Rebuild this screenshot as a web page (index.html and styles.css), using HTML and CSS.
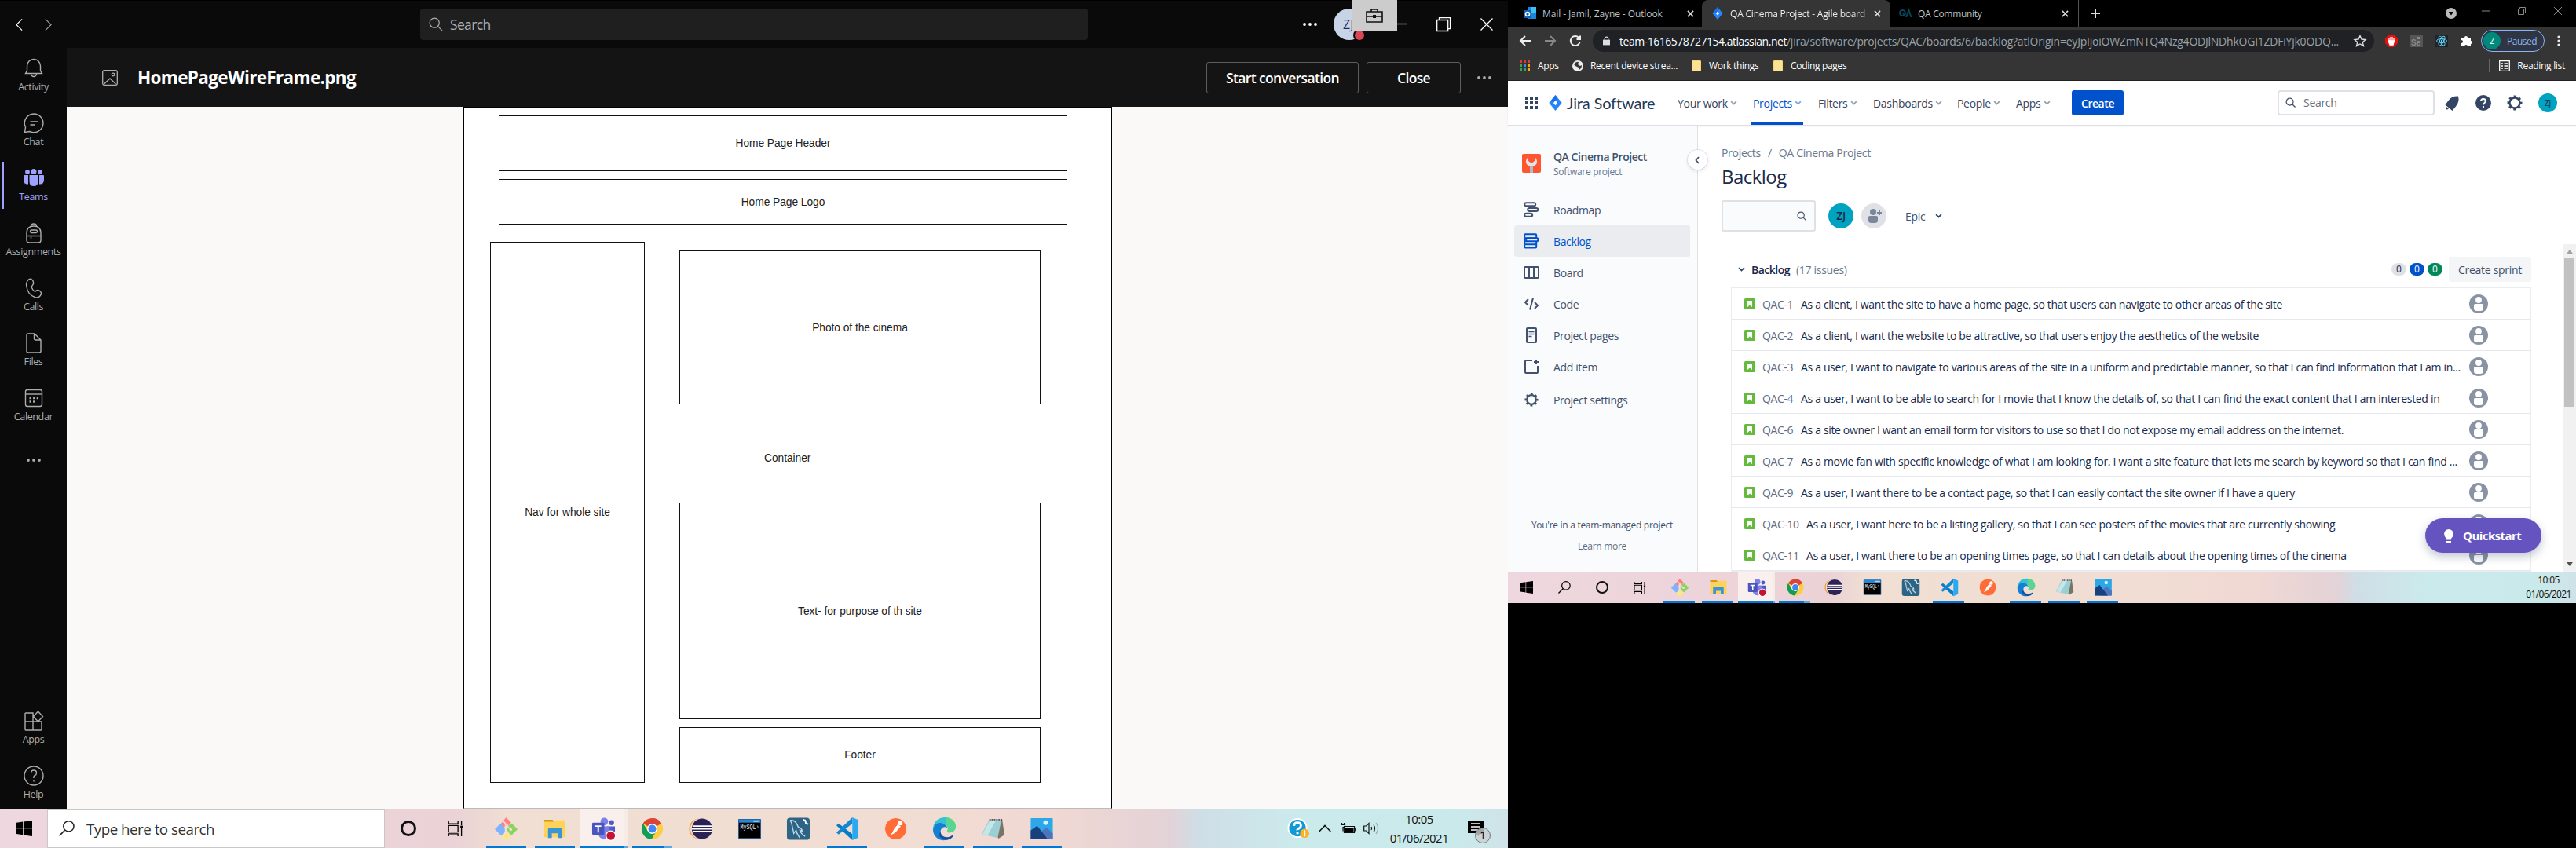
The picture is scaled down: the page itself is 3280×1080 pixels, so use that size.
FILE: index.html
```
<!DOCTYPE html>
<html lang="en">
<head>
<meta charset="utf-8">
<title>Desktop</title>
<link rel="stylesheet" href="styles.css">
</head>
<body>
<svg class="defs" aria-hidden="true">
  <symbol id="win" viewBox="0 0 20 20"><path d="M0 2.800 8.200 1.600v7.800H0zM9 1.500 20 0v9.400H9zM0 10.300h8.200v7.900L0 17zM9 10.300h11V20L9 18.400z"/></symbol>
  <symbol id="lens" viewBox="0 0 20 20"><circle cx="12.400" cy="7.400" r="6.600" fill="none" stroke="currentColor" stroke-width="1.500"/><path d="M7.600 12.200.6 19.400" stroke="currentColor" stroke-width="1.600"/></symbol>
  <symbol id="taskview" viewBox="0 0 20 20"><path d="M.7 0v3.300h12.600V0M.7 20v-3.300h12.600V20M.7 5.700h12.600v8.600H.7zM18 0v5.500M18 9.500V20" fill="none" stroke="currentColor" stroke-width="1.400"/><path d="M16.500 6h3v3h-3z"/></symbol>
  <symbol id="git" viewBox="0 0 32 32"><path d="m16 1 6.500 7-2.500 3-3 0-5 4-3.500-5z" fill="#ff7f84"/><path d="m8.500 9 6 7v6l-5 3L1 16.500z" fill="#80b3ff"/><path d="m23.500 9 7.500 7.500-8 8-3.500-3-2.500-4.500 1-5z" fill="#8ed35f"/><path d="m16 18.500 2.500 4 4.500 2-7 7-6.500-6.500 4-3z" fill="#ffe680"/><path d="m12 6 6 6m-3-2v12m2-10 5 5" fill="none" stroke="#f1dfd3" stroke-width="1.600"/><circle cx="15" cy="22" r="1.800" fill="#f1dfd3"/><circle cx="22" cy="17" r="1.800" fill="#f1dfd3"/></symbol>
  <symbol id="folder" viewBox="0 0 32 32"><path d="M2 4h11l2 3H2z" fill="#d99a00"/><path d="M2 7h12l2-2h14v22H2z" fill="#ffd35a"/><path d="M7 28V17q0-2 2-2h14q2 0 2 2v11h-5v-6h-8v6z" fill="#3a95d8"/></symbol>
  <symbol id="teams" viewBox="0 0 32 32"><circle cx="17" cy="6.500" r="5" fill="#7b83eb"/><circle cx="26.500" cy="8" r="3.300" fill="#5059c9"/><path d="M20 13h11v8a5 5 0 0 1-10 1z" fill="#5059c9"/><path d="M9 13h15v9a7.500 7.500 0 0 1-15 0z" fill="#7b83eb"/><rect x="1" y="8" width="16" height="16" rx="1.500" fill="#4b53bc"/><path d="M5 12.500h8M9 12.500V21" stroke="#fff" stroke-width="2"/><circle cx="25.500" cy="25" r="6.300" fill="#c4142f" stroke="#fff" stroke-width="1.400"/></symbol>
  <symbol id="chrome" viewBox="0 0 32 32"><circle cx="16" cy="16" r="14" fill="#ffcd40"/><path d="M16 16 3.900 9A14 14 0 0 1 28.100 9z" fill="#db4437"/><path d="M16 2A14 14 0 0 1 28.100 9H16z" fill="#db4437"/><path d="M3.900 9A14 14 0 0 0 15 30l6.500-11.500H10z" fill="#0f9d58"/><circle cx="16" cy="16" r="6.700" fill="#fff"/><circle cx="16" cy="16" r="5.200" fill="#4285f4"/></symbol>
  <symbol id="eclipse" viewBox="0 0 32 32"><circle cx="14" cy="16" r="13.500" fill="#f7941e"/><circle cx="16" cy="16" r="14" fill="#eedcd3"/><circle cx="17.500" cy="16" r="13.500" fill="#2c2255"/><path d="M5 12.500h25M4 16h27M5 19.500h25" stroke="#fff" stroke-width="2"/></symbol>
  <symbol id="mysql" viewBox="0 0 32 32"><rect x="1" y="3" width="30" height="26" rx="1" fill="#2b5f93"/><path d="M2 4h28v4H2z" fill="#2188d9"/><path d="M21 5h8v2h-8z" fill="#a9d4f5"/><path d="M2 8h28v20H2z"/><text x="3.500" y="17" class="mysql-label" fill="#eee" textLength="25" lengthAdjust="spacingAndGlyphs">MySQL›</text></symbol>
  <symbol id="bench" viewBox="0 0 32 32"><rect x="1" y="1.500" width="30" height="29" rx="4" fill="#2d6384"/><path d="M5 5c5-1 9 3 11 9 3 1 5 3 5 5l-3-1c1 4 4 6 7 8M5 5c4 4 2 8 4 12l1 5 3-4c1 5 3 7 5 10" fill="none" stroke="#bcd7e5" stroke-width="1.500"/><path d="m22 4 3 1 1 4 3 1" fill="none" stroke="#fff" stroke-width="2"/></symbol>
  <symbol id="code" viewBox="0 0 32 32"><path d="M23 1v30L2 11.500l3-2.500 18 14z" fill="#0a7bc8"/><path d="M23 1 2 21l3 2.500L23 9z" fill="#1587d0"/><path d="m23 1 8 3.500v23L23 31z" fill="#2aa9f0"/></symbol>
  <symbol id="postman" viewBox="0 0 32 32"><circle cx="16" cy="16" r="14.500" fill="#ff6c37" stroke="#fbe4da"/><path d="M20 9 10 24M19 11l3 2-7 8-4 2 4-8z" fill="#fff" stroke="#fff"/><circle cx="22" cy="8.500" r="3" fill="#fff"/></symbol>
  <symbol id="edge" viewBox="0 0 32 32"><path d="M1 17C1 7 8 1 17 1c8 0 14 6 14 12 0 5-4 8-8 8-3 0-4-1-3-3 2-5-2-8-6-8C8 10 3 13 1 17z" fill="#35c1d5"/><path d="M19 1c8 1 12 6 12 12 0 5-4 8-8 8-3 0-4-1-3-3 2-3 0-6-2-8z" fill="#62dc75" opacity=".75"/><path d="M1 17C3 9 9 7 14 9c3 1 5 3 6 6-5-4-10 1-9 7 1 5 5 8 10 8-10 4-20-3-20-13z" fill="#1480d3"/><path d="M11 18c-1 7 6 11 13 8 2-1 4-2 4-1-4 7-13 8-19 0z" fill="#164f9f"/></symbol>
  <symbol id="note" viewBox="0 0 32 32"><path d="M11 4h17l3 20-8 5z" fill="#7a7466"/><path d="M11 4h16l-5 24L1 23z" fill="#9ccfd4"/><path d="M12 5h8L9 24l-7-1z" fill="#c7e6e7"/><path d="M11 4h17" stroke="#555" stroke-width="2" stroke-dasharray="2 1"/></symbol>
  <symbol id="photo" viewBox="0 0 32 32"><rect x="1.500" y="2" width="29" height="28" rx="1" fill="#2ca8e8"/><circle cx="21" cy="8" r="3" fill="#d6f1ff"/><path d="m15 20 7-6 8.500 8v8h-20z" fill="#4e74bd"/><path d="M1.500 18 10 12l14 18H1.500z" fill="#17407c"/></symbol>
  <symbol id="jira" viewBox="0 0 18 22"><path d="m9 0 9 11-9 11L0 11z" fill="#2684ff"/><path d="m9 7.500 3 3.500-3 3.500L6 11z" fill="#fff"/><path d="m9 0 3 4-3 3.500L6 11l-3-3.500z" fill="#1468e0" opacity=".7"/></symbol>
  <symbol id="chev" viewBox="0 0 10 6"><path d="m1.200 1 3.800 3.600L8.800 1" fill="none" stroke="currentColor" stroke-width="2"/></symbol>
  <symbol id="x" viewBox="0 0 10 10"><path d="m1 1 8 8M9 1 1 9" stroke="currentColor" stroke-width="1.700"/></symbol>
  <symbol id="dots" viewBox="0 0 20 6"><circle cx="3" cy="3" r="1.900"/><circle cx="10" cy="3" r="1.900"/><circle cx="17" cy="3" r="1.900"/></symbol>
  <symbol id="story" viewBox="0 0 14 14"><rect width="14" height="14" rx="1.500" fill="#63ba3c"/><path d="M4 3h6v8L7 8.500 4 11z" fill="#fff"/></symbol>
  <symbol id="person" viewBox="0 0 24 24"><circle cx="12" cy="12" r="12" fill="#8993a4"/><circle cx="12" cy="7" r="3.900" fill="#fff"/><path d="M6 13.500Q6 12 7.500 12h9q1.500 0 1.500 1.500V18q0 3-4 3h-4q-4 0-4-3z" fill="#fff"/></symbol>
  <symbol id="find" viewBox="0 0 14 14"><circle cx="6" cy="6" r="4.800" fill="none" stroke="currentColor" stroke-width="1.400"/><path d="m9.500 9.500 4 4" stroke="currentColor" stroke-width="1.400"/></symbol>
  <symbol id="gear" viewBox="0 0 20 20"><circle cx="10" cy="10" r="6.500" fill="none" stroke="currentColor" stroke-width="2.400"/><circle cx="10" cy="10" r="8.200" fill="none" stroke="currentColor" stroke-width="2.600" stroke-dasharray="3.220" stroke-dashoffset="1.600"/></symbol>
</svg>

<main class="teams-screen">
  <header class="titlebar">
    <svg class="tb-back" viewBox="0 0 10 18"><path d="M9 1 1 9l8 8"/></svg>
    <svg class="tb-fwd" viewBox="0 0 10 18"><path d="m1 1 8 8-8 8"/></svg>
    <div class="tb-search"><svg viewBox="0 0 20 20"><circle cx="8" cy="8" r="6.700"/><path d="m13 13 6 6"/></svg>Search</div>
    <svg class="tb-dots"><use href="#dots"/></svg>
    <div class="tb-avatar">ZJ</div>
    <svg class="tb-min" viewBox="0 0 12 18"><path d="M0 8.500h12"/></svg>
    <svg class="tb-max" viewBox="0 0 18 18"><path d="M.7 3.500h14v14h-14zM3.500 3V.7h14v14H15"/></svg>
    <svg class="tb-close" viewBox="0 0 16 16"><path d="m.5.500 15 15m0-15-15 15"/></svg>
    <div class="presence"></div>
    <div class="briefcase"><svg viewBox="0 0 22 18"><path d="M1 4h20v13H1zM7 4V1h8v3M1 10h20" fill="none" stroke="#111" stroke-width="1.600"/><path d="M9 8h4v4H9z"/></svg></div>
  </header>
  <div class="teams-body">
    <nav class="rail">
      <a><svg viewBox="0 0 26 26"><path d="M2.500 19.500 4.500 16v-6a8.500 8.500 0 0 1 17 0v6l2 3.500zM9.500 20a3.500 3.500 0 0 0 7 0"/></svg>Activity</a>
      <a><svg viewBox="0 0 26 26"><path d="M1.500 24.500 2.500 18A11.800 11.800 0 1 1 8 23.500zM8.500 11h9.500M8.500 15h5.500"/></svg>Chat</a>
      <a class="on"><svg viewBox="0 0 26 26"><circle cx="5" cy="5" r="2.900"/><circle cx="13" cy="4.500" r="3.500"/><circle cx="21" cy="5" r="2.900"/><path d="M0 10q0-1 1-1h5v11.500Q0 21 0 15zM26 10q0-1-1-1h-5v11.500q6 .500 6-5.500zM7.500 9h11v8q0 6-5.500 6t-5.500-6z"/></svg>Teams</a>
      <a><svg viewBox="0 0 26 26"><path d="M4 13q0-9 9-9t9 9v9q0 3-3 3H7q-3 0-3-3zM4 16.500h18M9.500 16.500v3.500M9.500 4q0-3 3.500-3t3.500 3"/><rect x="8.500" y="9" width="9" height="3.500" rx="1.700"/></svg>Assignments</a>
      <a><svg viewBox="0 0 26 26"><path d="M5 3.500Q7 .500 10 1.500q3 2 2.500 6l-2.500 4q1.500 4 4.500 6 3-3 5.500-1.500 3 2 2.500 4.500-2 5-7 4.500Q5 22 3.500 9 3.500 6 5 3.500z"/></svg>Calls</a>
      <a><svg viewBox="0 0 26 26"><path d="M4 3q0-2 2-2h8l8 8v14q0 2-2 2H6q-2 0-2-2zM13.500 1v6q0 2 2 2H22"/></svg>Files</a>
      <a><svg viewBox="0 0 26 26"><rect x="2.500" y="2.500" width="21" height="21" rx="2.500"/><path d="M2.500 8h21"/><path d="M7.500 13h12M7.500 17.500h8" stroke-width="2.300" stroke-dasharray="2 2.600"/></svg>Calendar</a>
      <svg class="rail-dots"><use href="#dots"/></svg>
      <a class="rail-apps"><svg viewBox="0 0 26 26"><path d="M2 4q0-1 1-1h9v22H3q-1 0-1-1zM12 14h11v10q0 1-1 1H12zM2 14h10M12.500 7.500l6-6.500 6 6.500-6 6.500z"/></svg>Apps</a>
      <a><svg viewBox="0 0 26 26"><circle cx="13" cy="13" r="12"/><path d="M9.500 10q0-4 3.500-4t3.500 3.500q0 2-2 3T13 16M13 18.500V20.500"/></svg>Help</a>
    </nav>
    <section class="viewer">
      <div class="filebar">
        <svg class="file-ico" viewBox="0 0 20 20"><rect x=".7" y=".7" width="18.600" height="18.600" rx="2"/><path d="m2.500 18 7.500-7 7.500 7"/><circle cx="14" cy="6" r="1.800"/></svg>
        <h1>HomePageWireFrame.png</h1>
        <button class="start">Start conversation</button>
        <button class="closebtn">Close</button>
        <svg class="fb-dots"><use href="#dots"/></svg>
      </div>
      <div class="stage">
        <div class="wire">
          <div class="box w-head">Home Page Header</div>
          <div class="box w-logo">Home Page Logo</div>
          <div class="box w-nav">Nav for whole site</div>
          <div class="box w-photo">Photo of the cinema</div>
          <div class="w-label">Container</div>
          <div class="box w-text">Text- for purpose of th site</div>
          <div class="box w-foot">Footer</div>
        </div>
      </div>
    </section>
  </div>
  <footer class="taskbar">
    <span class="start-cell"><svg><use href="#win"/></svg></span>
    <div class="type-search"><svg><use href="#lens"/></svg>Type here to search</div>
    <span class="cell cortana"><i></i></span>
    <span class="cell"><svg class="tv"><use href="#taskview"/></svg></span>
    <span class="app run"><svg><use href="#git"/></svg></span>
    <span class="app run"><svg><use href="#folder"/></svg></span>
    <span class="app run active"><svg><use href="#teams"/></svg></span>
    <span class="app run multi"><svg><use href="#chrome"/></svg></span>
    <span class="app"><svg><use href="#eclipse"/></svg></span>
    <span class="app"><svg><use href="#mysql"/></svg></span>
    <span class="app"><svg><use href="#bench"/></svg></span>
    <span class="app run"><svg><use href="#code"/></svg></span>
    <span class="app"><svg><use href="#postman"/></svg></span>
    <span class="app run"><svg><use href="#edge"/></svg></span>
    <span class="app run"><svg><use href="#note"/></svg></span>
    <span class="app run"><svg><use href="#photo"/></svg></span>
    <div class="tray">
      <svg class="t-help" viewBox="0 0 30 30"><circle cx="13.500" cy="14" r="13" fill="#fff"/><circle cx="13.500" cy="14" r="11" fill="#0f9ad6"/><path d="M9 11.500q0-4.500 4.500-4.500t4.500 4q0 2-2.500 3.500T13.500 17M13.500 19v3" fill="none" stroke="#fff" stroke-width="3"/><circle cx="23" cy="21" r="6" fill="#fcb026"/><path d="M23 20v5M23 17v1.700" stroke="#fff" stroke-width="2"/></svg>
      <svg class="t-up" viewBox="0 0 16 10"><path d="m.7 9 7.300-7.500L15.300 9" fill="none" stroke="#111" stroke-width="1.600"/></svg>
      <svg class="t-bat" viewBox="0 0 20 14"><path d="M4.500 4.500h13v8h-13zM18.800 6.500v4M.5 2.500h5v3H3v5M1.500 0v3M4.500 0v3" fill="none" stroke="#111" stroke-width="1.200"/><path d="M6 6h10.500v5.500H6z"/></svg>
      <svg class="t-vol" viewBox="0 0 20 16"><path d="M.7 5h3L7 1.500v13L3.700 11h-3zM10 6q1.500 2 0 4M13 3.500q3 4.500 0 9" fill="none" stroke="#111" stroke-width="1.200"/><path d="M16 1q5 7 0 14" fill="none" stroke="#9aa" stroke-width="1.200"/></svg>
      <div class="clock"><span>10:05</span><span>01/06/2021</span></div>
      <div class="notif"><svg viewBox="0 0 20 20"><path d="M0 0h20v16h-5l-1 4-4-4H0z"/><path d="M4 4h12M4 8h12M4 12h9" stroke="#fff" stroke-width="1.300"/></svg><b>1</b></div>
    </div>
  </footer>
</main>

<aside class="second">
  <div class="tabs">
    <div class="tab t1"><svg viewBox="0 0 16 16"><path d="M5 0h11v15H5z" fill="#1b87d6"/><path d="M10 0h6v8h-6z" fill="#50d9ff" opacity=".7"/><rect y="4" width="10" height="10" rx="1" fill="#0f5fb8"/><circle cx="5" cy="9" r="2.500" fill="none" stroke="#fff" stroke-width="1.600"/></svg><span>Mail - Jamil, Zayne - Outlook</span><svg class="tx"><use href="#x"/></svg></div>
    <div class="tab t2"><svg><use href="#jira"/></svg><span>QA Cinema Project - Agile board</span><svg class="tx"><use href="#x"/></svg></div>
    <div class="tab t3"><svg viewBox="0 0 16 12"><circle cx="4.500" cy="5.500" r="3.500" fill="none" stroke="#064456" stroke-width="2"/><path d="m5 6 3 4M9 11l3.500-9 3 9" fill="none" stroke="#064456" stroke-width="2"/></svg><span>QA Community</span><svg class="tx"><use href="#x"/></svg></div>
    <svg class="plus" viewBox="0 0 12 12"><path d="M6 0v12M0 6h12"/></svg>
    <div class="winbtns">
      <svg class="wb-c" viewBox="0 0 14 14"><circle cx="7" cy="7" r="7" fill="#bbb"/><path d="M3.800 5h6.400L7 9.500z"/></svg>
      <svg class="wb-m" viewBox="0 0 10 10"><path d="M0 5h10"/></svg>
      <svg class="wb-r" viewBox="0 0 10 10"><path d="M.5 2.500h7v7h-7zM2.500 2V.5h7v7H8"/></svg>
      <svg class="wb-x" viewBox="0 0 10 10"><path d="m0 0 10 10M10 0 0 10"/></svg>
    </div>
  </div>
  <div class="toolbar">
    <svg class="nv" viewBox="0 0 14 14"><path d="M14 7H1.500M7 1 1 7l6 6"/></svg>
    <svg class="nv dim" viewBox="0 0 14 14"><path d="M0 7h12.500M7 1l6 6-6 6"/></svg>
    <svg class="nv" viewBox="0 0 14 14"><path d="M12.500 9A6 6 0 1 1 11 2.700L13 5M13 .5V5H8.500"/></svg>
    <div class="omni">
      <svg class="lock" viewBox="0 0 10 12"><path d="M0 4.500h10V12H0z" fill="#ddd"/><path d="M2.500 5V3a2.500 2.500 0 0 1 5 0v2" fill="none" stroke="#ddd" stroke-width="1.300"/></svg>
      <span class="host">team-1616578727154.atlassian.net</span><span class="path">/jira/software/projects/QAC/boards/6/backlog?atlOrigin=eyJpIjoiOWZmNTQ4Nzg4ODJlNDhkOGI1ZDFiYjk0ODQ...</span>
      <svg class="star" viewBox="0 0 16 16"><path d="m8 1.500 2 4.500 5 .500-3.700 3.200 1.100 4.800L8 12l-4.400 2.500 1.100-4.800L1 6.500 6 6z" fill="none" stroke="#ddd" stroke-width="1.400"/></svg>
    </div>
    <svg class="ext" viewBox="0 0 16 16"><path d="M5 0h6l5 5v6l-5 5H5l-5-5V5z" fill="#e8100c"/><path d="M5 8V5m2 3V3m2 5V3m2 5V5M5 8l-1 0 2 5h4l1.500-5z" stroke="#fff" fill="#fff" stroke-width="1.300"/></svg>
    <svg class="ext" viewBox="0 0 16 16"><path d="M0 0h16v16H0z" fill="#555"/><path d="M9 3h4v3H9zm5 1 1-.5v2z" fill="#888"/><text x="1" y="14" class="se" fill="#888">Se</text></svg>
    <svg class="ext" viewBox="0 0 16 16"><path d="M0 0h16v16H0z" fill="#20232a"/><g fill="none" stroke="#61dafb" stroke-width=".9"><ellipse cx="8" cy="8" rx="6.500" ry="2.500"/><ellipse cx="8" cy="8" rx="6.500" ry="2.500" transform="rotate(60 8 8)"/><ellipse cx="8" cy="8" rx="6.500" ry="2.500" transform="rotate(120 8 8)"/></g><circle cx="8" cy="8" r="1.200" fill="#61dafb"/></svg>
    <svg class="ext" viewBox="0 0 16 16"><path d="M1 4h4a2 2 0 1 1 4 0h4v4a2 2 0 1 1 0 4v3H9a2 2 0 1 0-4 0H1v-4a2 2 0 1 0 0-4z" fill="#fff"/></svg>
    <div class="paused"><i>Z</i>Paused</div>
    <svg class="kebab" viewBox="0 0 4 14"><circle cx="2" cy="2" r="1.600"/><circle cx="2" cy="7" r="1.600"/><circle cx="2" cy="12" r="1.600"/></svg>
  </div>
  <div class="bookmarks">
    <svg class="bm-apps" viewBox="0 0 13 13"><path d="M0 1.500h13" stroke="#e5392f"/><path d="M0 6.500h4.500" stroke="#35a853"/><path d="M5 6.500h3.500" stroke="#4285f4"/><path d="M10 6.500h3" stroke="#f9ab00"/><path d="M0 11.500h8" stroke="#35a853"/><path d="M10 11.500h3" stroke="#f9ab00"/></svg>
    <span class="b1">Apps</span>
    <svg class="globe" viewBox="0 0 14 14"><circle cx="7" cy="7" r="7" fill="#eee"/><path d="M2 5q3-4 6-3l-1 3 3 2 2-1q0 5-4 6V9L4 7z" fill="#353535"/></svg>
    <span class="b2">Recent device strea...</span>
    <i class="fold"></i><span class="b3">Work things</span>
    <i class="fold"></i><span class="b4">Coding pages</span>
    <div class="reading"><svg viewBox="0 0 14 14"><path d="M.7.700h12.600v12.600H.7zM3 4h2m1.500 0H11M3 7h2m1.500 0H11M3 10h2m1.500 0H11" fill="none" stroke="#fff" stroke-width="1.300"/></svg>Reading list</div>
  </div>
  <div class="jnav">
    <svg class="grid9" viewBox="0 0 16 16"><path d="M0 2h16M0 8h16M0 14h16" stroke="#344563" stroke-width="4" stroke-dasharray="4 2"/></svg>
    <svg class="jlogo"><use href="#jira"/></svg>
    <span class="jname">Jira Software</span>
    <a class="n1">Your work<svg><use href="#chev"/></svg></a>
    <a class="n2 sel">Projects<svg><use href="#chev"/></svg></a>
    <a class="n3">Filters<svg><use href="#chev"/></svg></a>
    <a class="n4">Dashboards<svg><use href="#chev"/></svg></a>
    <a class="n5">People<svg><use href="#chev"/></svg></a>
    <a class="n6">Apps<svg><use href="#chev"/></svg></a>
    <button class="create">Create</button>
    <div class="jsearch"><svg><use href="#find"/></svg>Search</div>
    <div class="jicons">
      <svg viewBox="0 0 20 20"><path d="M18 1.500Q10 1 6 6.500L1.500 12.500l9 7.500 4.500-5.500q5-6 3-13zM3 15l3 3-3 .500z" fill="currentColor"/></svg>
      <svg viewBox="0 0 20 20"><circle cx="10" cy="10" r="10" fill="currentColor"/><path d="M7 8q0-3 3-3t3 2.600Q13 9 11.500 10T10 12.500M10 14v2" fill="none" stroke="#fff" stroke-width="2"/></svg>
      <svg><use href="#gear"/></svg>
      <i>ZJ</i>
    </div>
  </div>
  <div class="jbody">
    <div class="side">
      <div class="proj"><svg viewBox="0 0 24 24"><rect width="24" height="24" rx="2" fill="#ff5630"/><path d="M10 14h4v10h-4z" fill="#b3bac5"/><path d="M8 4v5l4 3 4-3V4q3 2 3 6 0 4-5 6h-4q-5-2-5-6 0-4 3-6z" fill="#dfe4ea"/></svg><div><b>QA Cinema Project</b><small>Software project</small></div></div>
      <a><svg viewBox="0 0 20 20"><rect x="1.200" y="1.200" width="14" height="4" rx="2"/><rect x="5.200" y="8" width="13" height="4" rx="2"/><rect x="1.200" y="14.800" width="10" height="4" rx="2"/></svg>Roadmap</a>
      <a class="cur"><svg viewBox="0 0 20 20"><rect x="1.200" y="1.200" width="15" height="5" rx="1"/><rect x="3.200" y="6.200" width="15" height="4" rx="1"/><path d="M1.200 6v11.500q0 1 1 1h13q1 0 1-1V10M1.200 14.300h15M1.200 10.200h3"/></svg>Backlog</a>
      <a><svg viewBox="0 0 20 20"><rect x="1" y="3" width="18" height="14" rx="1"/><path d="M7 3v14M13 3v14"/></svg>Board</a>
      <a><svg viewBox="0 0 20 20"><path d="M6 4 2 8l4 4M14 8l4 4-4 4M12 2.500 8 17.500"/></svg>Code</a>
      <a><svg viewBox="0 0 20 20"><rect x="4" y="1" width="12" height="18" rx="1"/><path d="M6.500 5.500h7M6.500 8.500h7M6.500 11.500h4" stroke-width="1.500"/></svg>Project pages</a>
      <a><svg viewBox="0 0 20 20"><path d="M11 2H3q-1 0-1 1v14q0 1 1 1h14q1 0 1-1V9M16 1v6M13 4h6"/></svg>Add item</a>
      <a class="last"><svg class="g"><use href="#gear"/></svg>Project settings</a>
      <p class="tm">You're in a team-managed project</p>
      <p class="lm">Learn more</p>
      <div class="collapse"><svg viewBox="0 0 6 10"><path d="M5 1 1.500 5 5 9" fill="none" stroke="#42526e" stroke-width="1.800"/></svg></div>
    </div>
    <div class="content">
      <div class="crumbs"><span>Projects</span><span>/</span><span>QA Cinema Project</span></div>
      <h2>Backlog</h2>
      <div class="filters">
        <div class="fsearch"><svg><use href="#find"/></svg></div>
        <i class="zj">ZJ</i>
        <svg class="adduser" viewBox="0 0 32 32"><circle cx="16" cy="16" r="16" fill="#dfe1e6"/><circle cx="15" cy="11" r="4" fill="#7a869a"/><path d="M9 18q0-2 2-2h8q2 0 2 2v4q0 3-4 3h-4q-4 0-4-3z" fill="#7a869a"/><path d="M20 12h6M23 9v6" stroke="#7a869a" stroke-width="2"/></svg>
        <span class="epic">Epic</span><svg class="ec"><use href="#chev"/></svg>
      </div>
      <div class="sect">
        <svg class="sc"><use href="#chev"/></svg><b>Backlog</b><span>(17 issues)</span>
        <i class="c0">0</i><i class="c1">0</i><i class="c2">0</i><button>Create sprint</button>
      </div>
      <div class="list">
        <div class="row"><svg class="st"><use href="#story"/></svg><em>QAC-1</em><span>As a client, I want the site to have a home page, so that users can navigate to other areas of the site</span><svg class="pe"><use href="#person"/></svg></div>
        <div class="row"><svg class="st"><use href="#story"/></svg><em>QAC-2</em><span>As a client, I want the website to be attractive, so that users enjoy the aesthetics of the website</span><svg class="pe"><use href="#person"/></svg></div>
        <div class="row"><svg class="st"><use href="#story"/></svg><em>QAC-3</em><span class="long">As a user, I want to navigate to various areas of the site in a uniform and predictable manner, so that I can find information that I am in...</span><svg class="pe"><use href="#person"/></svg></div>
        <div class="row"><svg class="st"><use href="#story"/></svg><em>QAC-4</em><span>As a user, I want to be able to search for I movie that I know the details of, so that I can find the exact content that I am interested in</span><svg class="pe"><use href="#person"/></svg></div>
        <div class="row"><svg class="st"><use href="#story"/></svg><em>QAC-6</em><span class="long">As a site owner I want an email form for visitors to use so that I do not expose my email address on the internet.</span><svg class="pe"><use href="#person"/></svg></div>
        <div class="row"><svg class="st"><use href="#story"/></svg><em>QAC-7</em><span>As a movie fan with specific knowledge of what I am looking for. I want a site feature that lets me search by keyword so that I can find ...</span><svg class="pe"><use href="#person"/></svg></div>
        <div class="row"><svg class="st"><use href="#story"/></svg><em>QAC-9</em><span>As a user, I want there to be a contact page, so that I can easily contact the site owner if I have a query</span><svg class="pe"><use href="#person"/></svg></div>
        <div class="row"><svg class="st"><use href="#story"/></svg><em class="wide">QAC-10</em><span>As a user, I want here to be a listing gallery, so that I can see posters of the movies that are currently showing</span><svg class="pe"><use href="#person"/></svg></div>
        <div class="row"><svg class="st"><use href="#story"/></svg><em class="wide">QAC-11</em><span>As a user, I want there to be an opening times page, so that I can details about the opening times of the cinema</span><svg class="pe"><use href="#person"/></svg></div>
      </div>
      <div class="scroll"><svg viewBox="0 0 8 5"><path d="M0 5 4 0l4 5z" fill="#a3a3a3"/></svg><i></i><svg class="dn" viewBox="0 0 8 5"><path d="m0 0 4 5 4-5z" fill="#505050"/></svg></div>
      <div class="quick"><svg viewBox="0 0 14 20"><path d="M7 0a7 7 0 0 1 7 7q0 4-3.500 7v2h-7v-2Q0 11 0 7a7 7 0 0 1 7-7zM3.500 17.500h7V20h-7z" fill="#fff"/></svg>Quickstart</div>
    </div>
  </div>
  <footer class="taskbar mini">
    <span class="cell"><svg class="wn"><use href="#win"/></svg></span>
    <span class="cell"><svg class="ln"><use href="#lens"/></svg></span>
    <span class="cell cortana"><i></i></span>
    <span class="cell"><svg class="tv"><use href="#taskview"/></svg></span>
    <span class="app run"><svg><use href="#git"/></svg></span>
    <span class="app run"><svg><use href="#folder"/></svg></span>
    <span class="app run active"><svg><use href="#teams"/></svg></span>
    <span class="app run multi"><svg><use href="#chrome"/></svg></span>
    <span class="app"><svg><use href="#eclipse"/></svg></span>
    <span class="app"><svg><use href="#mysql"/></svg></span>
    <span class="app"><svg><use href="#bench"/></svg></span>
    <span class="app run"><svg><use href="#code"/></svg></span>
    <span class="app"><svg><use href="#postman"/></svg></span>
    <span class="app run"><svg><use href="#edge"/></svg></span>
    <span class="app run"><svg><use href="#note"/></svg></span>
    <span class="app run"><svg><use href="#photo"/></svg></span>
    <div class="clock"><span>10:05</span><span>01/06/2021</span></div>
  </footer>
</aside>
</body>
</html>
```
FILE: styles.css
```
* { box-sizing: border-box; }
body { margin: 0; width: 3280px; height: 1080px; overflow: hidden; background: #000; display: flex; font-family: "Open Sans", "Noto Sans", sans-serif; white-space: nowrap; }
svg { display: block; flex: none; overflow: visible; }
button { font-family: inherit; padding: 0; border: 0; flex: none; }
i, em { font-style: normal; }
.defs { position: absolute; width: 0; height: 0; }
.mysql-label { font: 9px "Liberation Mono", monospace; }
.se { font: bold 10px "Liberation Sans", sans-serif; }

/* Teams window */
.teams-screen { width: 1920px; height: 1080px; flex: none; display: flex; flex-direction: column; }
.titlebar { position: relative; height: 61px; background: #0a0a0a; border-top: 1px solid #000; display: flex; align-items: center; flex: none; }
.titlebar svg { fill: none; stroke: #fff; stroke-width: 1.3; }
.tb-back { width: 9px; height: 17px; margin-left: 20px; }
.tb-fwd { width: 9px; height: 17px; margin-left: 28px; opacity: .6; }
.tb-search { width: 850px; height: 40px; margin-left: 469px; background: #1f1f1f; border-radius: 4px; display: flex; align-items: center; gap: 9px; padding-left: 11px; color: #adadad; font-size: 17.5px; letter-spacing: -.65px; }
.tb-search svg { width: 18px; height: 18px; stroke: #adadad; }
.titlebar .tb-dots { width: 20px; height: 6px; margin-left: 273px; fill: #fff; stroke: none; }
.tb-avatar { width: 40px; height: 40px; border-radius: 50%; background: #c7d4e8; color: #1b2c5c; margin-left: 20px; padding-left: 12px; line-height: 40px; font-size: 16px; overflow: hidden; }
.tb-min { width: 12px; height: 18px; margin-left: 41px; }
.tb-max { width: 18px; height: 18px; margin-left: 38px; }
.tb-close { width: 16px; height: 16px; margin-left: 38px; }
.presence { position: absolute; left: 1725px; top: 38px; width: 12px; height: 12px; border-radius: 50%; background: #dc4553; box-shadow: 0 0 0 2px #0a0a0a; }
.briefcase { position: absolute; left: 1721px; top: -1px; width: 58px; height: 40px; background: #ccc; display: flex; align-items: center; justify-content: center; }
.briefcase svg { width: 22px; height: 18px; stroke: none; fill: #111; }
.teams-body { flex: 1; display: flex; min-height: 0; }
.rail { width: 85px; background: #0a0a0a; display: flex; flex-direction: column; padding-top: 9px; }
.rail a { height: 70px; display: flex; flex-direction: column; align-items: center; padding-top: 4px; color: #adadad; font-size: 12.5px; letter-spacing: -.37px; line-height: 16px; gap: 3px; flex: none; }
.rail a svg { width: 26px; height: 26px; fill: none; stroke: #adadad; stroke-width: 1.4; }
.rail .on { color: #9ea2ff; position: relative; }
.rail .on::before { content: ""; position: absolute; left: 3px; top: -4px; width: 2px; height: 60px; background: #9ea2ff; }
.rail .on svg { fill: #9ea2ff; stroke: none; }
.rail-dots { width: 20px; height: 6px; margin: 23px auto 0 33px; fill: #adadad; }
.rail .rail-apps { margin-top: auto; }
.rail > a:last-child { height: 59px; }
.viewer { flex: 1; display: flex; flex-direction: column; }
.filebar { height: 75px; background: #141414; display: flex; align-items: center; }
.file-ico { width: 20px; height: 20px; margin-left: 45px; fill: none; stroke: #adadad; stroke-width: 1.3; }
.filebar h1 { margin: 0 0 0 25px; width: 1361px; font-size: 22.5px; font-weight: 700; letter-spacing: -.67px; color: #fff; }
.filebar button { height: 40px; background: #141414; border: 1px solid #605e5c; border-radius: 3px; color: #fff; font-size: 17.5px; font-weight: 600; letter-spacing: -.64px; }
.start { width: 194px; }
.filebar .closebtn { width: 120px; margin-left: 10px; }
.fb-dots { width: 20px; height: 6px; margin-left: 20px; fill: #adadad; }
.stage { flex: 1; background: #faf9f8; position: relative; }
.wire { position: absolute; left: 505px; top: 0; width: 826px; height: 894px; background: #fff; border: 1px solid #000; border-bottom-color: #bbb; font: 13.8px "Liberation Sans", Arial, sans-serif; letter-spacing: -.06px; color: #222; }
.box { position: absolute; border: 1px solid #111; display: flex; align-items: center; justify-content: center; }
.w-head { left: 44px; top: 10px; width: 724px; height: 71px; }
.w-logo { left: 44px; top: 91px; width: 724px; height: 58px; }
.w-nav { left: 33px; top: 171px; width: 197px; height: 689px; }
.w-photo { left: 274px; top: 182px; width: 460px; height: 196px; }
.w-text { left: 274px; top: 503px; width: 460px; height: 276px; }
.w-foot { left: 274px; top: 789px; width: 460px; height: 71px; }
.w-label { position: absolute; left: 382px; top: 439px; }

/* Taskbars */
.taskbar { height: 50px; flex: none; display: flex; background: linear-gradient(90deg, #efd7df 0, #ead2d6 30%, #f1dfd3 34%, #f1ddd3 60%, #f0d8d3 70%, #e3d2d7 77.5%, #cfdee6 79.5%, #cbeaec 86%, #cae9eb 97%, #cfe2e8 100%); }
.start-cell { width: 60px; display: flex; align-items: center; justify-content: center; }
.start-cell svg { width: 20px; height: 20px; margin-left: 1px; }
.type-search { width: 430px; height: 50px; background: #fff; border: 1px solid #c8c8c8; display: flex; align-items: center; gap: 15px; padding-left: 14px; font-size: 18.75px; letter-spacing: -.5px; color: #333; }
.type-search svg { width: 20px; height: 20px; color: #222; }
.cell { width: 60px; display: flex; align-items: center; justify-content: center; }
.cell:nth-child(4) { margin-right: 3px; }
.cortana i { width: 20px; height: 20px; border: 3px solid #111; border-radius: 50%; }
.tv { width: 20px; height: 19px; }
.app { width: 62px; display: flex; align-items: center; justify-content: center; position: relative; }
.app svg { width: 31px; height: 31px; position: relative; }
.run::after { content: ""; position: absolute; left: 6px; right: 5px; bottom: 0; height: 3px; background: #0078d7; }
.active { background: linear-gradient(90deg, #f9f0ee 0 56px, #cdbfbd 56px 57px, #f6ebe7 57px) no-repeat 1px 0 / 61px 100%; }
.active::after { left: 1px; right: 0; background: linear-gradient(90deg, #0078d7 57px, #5aa9e6 57px); }
.multi::after { right: 5px; background: linear-gradient(90deg, #0078d7 41px, #5aa9e6 41px); }
.tray { margin-left: auto; display: flex; align-items: center; }
.t-help { width: 29px; height: 29px; margin-right: 11px; }
.t-up { width: 16px; height: 10px; margin-right: 12px; }
.t-bat { width: 20px; height: 14px; margin-right: 9px; }
.t-vol { width: 20px; height: 16px; margin-right: 12px; }
.clock { display: flex; flex-direction: column; align-items: center; font-size: 15px; line-height: 24px; letter-spacing: -.51px; color: #111; width: 78px; }
.notif { position: relative; width: 51px; height: 20px; margin-left: 23px; }
.notif svg { width: 20px; height: 20px; }
.notif b { position: absolute; left: 9px; top: 9px; width: 20px; height: 20px; border: 1px solid #777; border-radius: 50%; background: #c9cfd1cc; font-weight: 400; font-size: 14px; line-height: 18px; text-align: center; }

/* Browser window */
.second { width: 1360px; height: 768px; flex: none; display: flex; flex-direction: column; position: relative; }
.tabs { height: 34px; background: #000; display: flex; color: #bdc1c6; font-size: 12px; letter-spacing: -.09px; flex: none; }
.tab { display: flex; align-items: center; padding-left: 20px; }
.tab > svg:first-child { width: 16px; height: 16px; margin-right: 8px; }
.tab span { flex: 1; overflow: hidden; }
.tab .tx { width: 9px; height: 9px; color: #ddd; }
.t1 { width: 247px; padding-right: 10px; }
.t2 { width: 240px; background: #353535; border-radius: 8px 8px 0 0; padding-left: 12px; padding-right: 12px; color: #e8eaed; }
.t2 span { letter-spacing: -.2px; margin-right: 11px; -webkit-mask: linear-gradient(90deg, #000 90%, #0008); }
.t3 { width: 240px; padding-left: 11px; padding-right: 12px; border-right: 1px solid #555; background: #000; }
.t3 span { letter-spacing: -.3px; }
.plus { width: 12px; height: 12px; margin: 11px 0 0 15px; stroke: #ddd; stroke-width: 2; }
.winbtns { margin-left: auto; display: flex; stroke: #888; fill: none; }
.wb-c { width: 14px; height: 14px; margin: 10px 32px 0 0; stroke: none; fill: #000; }
.wb-m, .wb-r, .wb-x { width: 10px; height: 10px; margin: 9px 36px 0 0; }
.winbtns .wb-x { margin-right: 18px; }
.toolbar { height: 36px; background: #353535; display: flex; align-items: center; padding-left: 15px; flex: none; }
.nv { width: 14px; height: 14px; margin-right: 18px; fill: none; stroke: #eee; stroke-width: 2; }
.nv.dim { stroke: #888; }
.omni { width: 995px; height: 28px; margin-left: -3px; background: #202124; border-radius: 14px; display: flex; align-items: center; padding-left: 13px; font-size: 14px; color: #fff; }
.lock { width: 9px; height: 12px; margin-right: 12px; }
.host { letter-spacing: -.48px; }
.path { letter-spacing: -.23px; color: #9aa0a6; flex: 1; }
.star { width: 16px; height: 16px; margin-right: 10px; }
.ext { width: 16px; height: 16px; margin-left: 16px; }
.omni + .ext { margin-left: 14px; }
.paused { width: 81px; height: 28px; margin-left: 10px; border: 1px solid #8ab4f8; border-radius: 14px; background: #2f3542; color: #8ab4f8; font-size: 12px; letter-spacing: -.5px; display: flex; align-items: center; gap: 8px; padding-left: 2px; }
.paused i { width: 22px; height: 22px; border-radius: 50%; background: #00897b; color: #fff; font-size: 10px; line-height: 22px; text-align: center; }
.kebab { width: 4px; height: 14px; margin-left: 16px; fill: #eee; }
.bookmarks { height: 33px; background: #353535; border-bottom: 1px solid #222; display: flex; align-items: center; padding: 0 14px 4px 15px; font-size: 12px; letter-spacing: -.31px; color: #fff; flex: none; margin-top: -1px; height: 34px; }
.bm-apps { width: 13px; height: 13px; margin-right: 10px; stroke-width: 3; stroke-dasharray: 3 2; }
.b1 { width: 44px; }
.globe { width: 14px; height: 14px; margin-right: 9px; }
.b2 { width: 129px; }
.b3 { width: 82px; }
.fold { width: 12px; height: 14px; background: #fde293; border: 1px solid #f3d573; border-radius: 1px; margin-right: 10px; }
.reading { margin-left: auto; display: flex; align-items: center; gap: 9px; border-left: 1px solid #666; padding-left: 12px; letter-spacing: -.3px; }
.reading svg { width: 14px; height: 14px; }
.jnav { height: 57px; background: #fff; border-bottom: 1px solid #dcdfe5; display: flex; align-items: center; padding-left: 22px; color: #344563; font-size: 14px; font-weight: 500; letter-spacing: -.3px; flex: none; position: relative; z-index: 1; box-shadow: 0 1px 2px #091e4214; }
.grid9 { width: 16px; height: 16px; margin-right: 14px; }
.jlogo { width: 17px; height: 20px; margin-right: 6px; }
.jname { font-family: Lato, sans-serif; font-size: 20px; font-weight: 400; letter-spacing: -.15px; width: 141px; color: #253858; }
.jnav a { display: flex; align-items: center; justify-content: space-between; height: 56px; }
.jnav a svg { width: 9px; height: 6px; opacity: .5; }
.n1 { width: 76px; margin-right: 20px; }
.n2 { width: 62px; margin-right: 21px; }
.n3 { width: 50px; margin-right: 20px; }
.n4 { width: 88px; margin-right: 19px; }
.n5 { width: 55px; margin-right: 20px; }
.n6 { width: 44px; margin-right: 27px; }
.sel { color: #0052cc; position: relative; }
.sel::after { content: ""; position: absolute; left: -2px; right: -2px; bottom: 0; height: 3px; background: #0052cc; }
.create { width: 66px; height: 32px; border-radius: 3px; background: #0052cc; color: #fff; font-size: 14px; font-weight: 600; letter-spacing: -.45px; }
.jsearch { width: 200px; height: 32px; margin-left: auto; border: 2px solid #dfe1e6; border-radius: 4px; display: flex; align-items: center; gap: 10px; padding: 0 0 2px 8px; font-weight: 400; color: #6b6f78; }
.jsearch svg { width: 13px; height: 13px; color: #42526e; }
.jicons { display: flex; align-items: center; gap: 20px; margin: 0 24px 0 12px; }
.jicons svg { width: 20px; height: 20px; }
.jicons i { width: 24px; height: 24px; border-radius: 50%; background: #00a3bf; color: #172b4d; font-size: 10px; line-height: 24px; text-align: center; }
.jbody { flex: 1; display: flex; min-height: 0; background: #fff; }
.side { width: 242px; background: #fafbfc; border-right: 1px solid #dfe1e6; padding: 30px 9px 0 8px; position: relative; z-index: 1; display: flex; flex-direction: column; color: #42526e; font-size: 14px; letter-spacing: -.37px; }
.proj { display: flex; gap: 16px; padding: 6px 0 0 10px; height: 57px; }
.proj svg { width: 24px; height: 24px; }
.proj div { display: flex; flex-direction: column; margin-top: -6px; line-height: 20px; }
.proj b { font-weight: 600; letter-spacing: -.44px; }
.proj small { font-size: 12px; line-height: 18px; color: #6b778c; letter-spacing: -.3px; }
.side a { height: 40px; display: flex; align-items: center; gap: 18px; padding-left: 12px; border-radius: 3px; flex: none; }
.side a svg { width: 20px; height: 20px; fill: none; stroke: currentColor; stroke-width: 2; }
.side a .g { stroke: none; width: 18px; height: 18px; margin: 0 1px; }
.side .cur { background: #ebecf0; color: #0052cc; }
.side .last { margin-top: 2px; }
.side p { margin: 0; text-align: center; font-size: 12px; letter-spacing: -.29px; line-height: 18px; }
.side .tm { margin-top: 131px; }
.side .lm { margin-top: 9px; color: #5e6c84; font-weight: 500; }
.collapse { position: absolute; right: -13px; top: 31px; width: 25px; height: 25px; border-radius: 50%; background: #fff; box-shadow: 0 0 0 1px #091e4214, 0 2px 4px 1px #091e4214; display: flex; align-items: center; justify-content: center; }
.collapse svg { width: 6px; height: 10px; margin-right: 1px; }
.content { flex: 1; position: relative; padding: 25px 58px 0 30px; overflow: hidden; color: #172b4d; font-size: 14px; }
.crumbs { display: flex; gap: 9px; line-height: 20px; color: #6b778c; letter-spacing: -.3px; }
.content h2 { margin: 6px 0 0; font-size: 24px; font-weight: 500; line-height: 28px; letter-spacing: -.54px; }
.filters { height: 40px; margin-top: 16px; display: flex; align-items: center; }
.fsearch { width: 120px; height: 40px; border: 2px solid #dfe1e6; border-radius: 3px; background: #fafbfc; display: flex; align-items: center; justify-content: flex-end; padding-right: 10px; color: #42526e; }
.fsearch svg { width: 12px; height: 12px; }
.zj { width: 32px; height: 32px; border-radius: 50%; margin: 0 10px 0 16px; background: #00a3bf; font-weight: 600; line-height: 32px; text-align: center; letter-spacing: -.4px; }
.adduser { width: 32px; height: 32px; }
.epic { margin-left: 24px; width: 38px; font-weight: 500; color: #42526e; letter-spacing: -.3px; }
.ec, .sc { width: 9px; height: 6px; color: #344563; }
.sect { height: 32px; margin-top: 32px; padding-left: 21px; display: flex; align-items: center; }
.sect b { font-weight: 600; letter-spacing: -.5px; margin: 0 8px 0 8px; }
.sect span { color: #6b778c; letter-spacing: -.3px; flex: 1; }
.sect i { width: 19px; height: 16px; border-radius: 8px; font-size: 12px; line-height: 16px; text-align: center; margin-right: 4px; color: #fff; }
.sect .c0 { background: #dfe1e6; color: #172b4d; }
.sect .c1 { background: #0052cc; }
.sect .c2 { background: #00875a; margin-right: 8px; }
.sect button { width: 105px; height: 32px; margin-right: -1px; border-radius: 3px; background: #f4f5f7; color: #42526e; font-size: 14px; font-weight: 500; letter-spacing: -.29px; }
.list { margin: 7px 0 0 12px; width: 1019px; border: 1px solid #ebecf0; }
.row { height: 40px; border-bottom: 1px solid #e6e8ed; display: flex; align-items: center; padding: 1px 54px 0 16px; }
.st { width: 14px; height: 14px; margin-right: 9px; }
.row em { width: 49px; color: #5e6c84; letter-spacing: -.4px; }
.row .wide { width: 56px; }
.row span { flex: 1; letter-spacing: -.32px; }
.row .long { letter-spacing: -.34px; }
.pe { width: 24px; height: 24px; }
.scroll { position: absolute; right: 0; top: 151px; bottom: 0; width: 17px; background: #f1f1f1; display: flex; flex-direction: column; align-items: center; padding: 7px 0; }
.scroll i { width: 13px; height: 190px; background: #c1c1c1; margin-top: 5px; }
.scroll svg { width: 8px; height: 5px; }
.scroll .dn { margin-top: auto; }
.quick { position: absolute; right: 44px; bottom: 24px; width: 148px; height: 44px; border-radius: 22px; background: #6554c0; color: #fff; font-size: 15px; font-weight: 700; letter-spacing: -.55px; display: flex; align-items: center; gap: 12px; padding-left: 24px; box-shadow: 0 5px 12px #091e4240; }
.quick svg { width: 12px; height: 17px; }
.mini { height: 40px; }
.mini .cell { width: 48px; }
.mini .cell:nth-child(4) { margin-right: 2px; }
.mini .wn { width: 16px; height: 16px; }
.mini .ln { width: 16px; height: 16px; }
.mini .cortana i { width: 16px; height: 16px; border-width: 2.5px; }
.mini .tv { width: 16px; height: 15px; }
.mini .app { width: 49px; }
.mini .app svg { width: 24px; height: 24px; }
.mini .run::after { left: 4px; right: 5px; height: 2px; }
.mini .active { background-size: 47px 100%; background-image: linear-gradient(90deg, #f9f0ee 0 44px, #cdbfbd 44px 45px, #f6ebe7 45px); }
.mini .active::after { left: 1px; right: 1px; background: linear-gradient(90deg, #0078d7 45px, #5aa9e6 45px); }
.mini .multi::after { background: linear-gradient(90deg, #0078d7 32px, #5aa9e6 32px); }
.mini .clock { margin-left: auto; margin-right: 4px; width: 62px; font-size: 12px; line-height: 18px; letter-spacing: -.62px; padding-top: 2px; }
```
